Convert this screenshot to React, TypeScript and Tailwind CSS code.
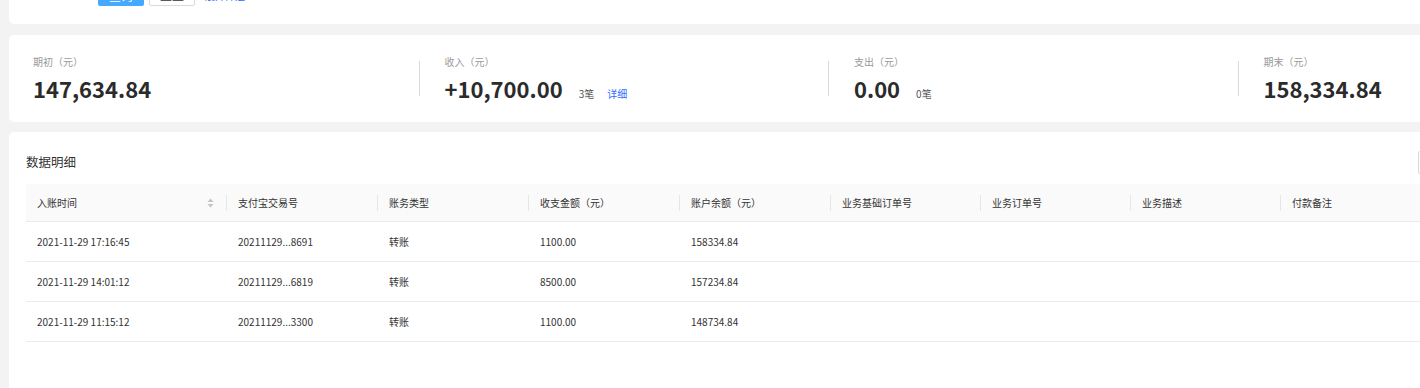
import React from "react";

const font = { fontFamily: '"Noto Sans CJK SC", "Noto Sans", sans-serif' };

function Stat({
  label,
  value,
  extra,
  link,
  first,
}: {
  label: string;
  value: string;
  extra?: string;
  link?: string;
  first?: boolean;
}) {
  return (
    <div className="flex w-[409.5px] shrink-0 items-center">
      {!first && <div className="h-[35px] w-px bg-[#d9d9d9]" />}
      <div className={first ? "pl-[24px]" : "pl-[25px]"}>
        <div className="text-[10px] leading-[14px] text-[#999]">{label}</div>
        <div className="mt-[5px] flex items-baseline">
          <span className="text-[22px] font-bold leading-[28px] text-[#2b2b2b]">{value}</span>
          {extra && <span className="ml-[16px] text-[10px] text-[#555]">{extra}</span>}
          {link && <span className="ml-[13px] text-[10px] text-[#2f6bff]">{link}</span>}
        </div>
      </div>
    </div>
  );
}

const cols = [
  "入账时间",
  "支付宝交易号",
  "账务类型",
  "收支金额（元）",
  "账户余额（元）",
  "业务基础订单号",
  "业务订单号",
  "业务描述",
  "付款备注",
];

const rows = [
  ["2021-11-29 17:16:45", "20211129...8691", "转账", "1100.00", "158334.84"],
  ["2021-11-29 14:01:12", "20211129...6819", "转账", "8500.00", "157234.84"],
  ["2021-11-29 11:15:12", "20211129...3300", "转账", "1100.00", "148734.84"],
];

const grid =
  "grid grid-cols-[200px_151px_151px_151px_151px_150px_150px_150px_200px]";

function SortIcon() {
  return (
    <svg width="7" height="10" viewBox="0 0 7 10" className="shrink-0">
      <path d="M3.5 0.5 L6.5 4 L0.5 4 Z" fill="#c4c4c4" />
      <path d="M3.5 9.5 L6.5 6 L0.5 6 Z" fill="#c4c4c4" />
    </svg>
  );
}

export default function App() {
  return (
    <div
      className="h-[388px] w-[1420px] overflow-hidden bg-[#f3f3f3]"
      style={font}
    >
      {/* top filter card */}
      <div className="ml-[9px] -mt-[30px] h-[54px] w-[1700px] rounded-[5px] bg-white">
        <div className="flex items-end gap-[5px] pl-[89px] pt-[12px]">
          <button className="flex h-[24px] w-[46px] items-end justify-center rounded-[2px] bg-[#45a9ff] pb-[3px] text-[12px] leading-[14px] text-white">
            查询
          </button>
          <button className="flex h-[24px] w-[46px] items-end justify-center rounded-[2px] border border-[#d9d9d9] bg-white pb-[3px] text-[12px] leading-[14px] text-[#333]">
            重置
          </button>
          <span className="ml-[5px] flex h-[24px] items-end pb-[3px] text-[10px] leading-[14px] text-[#1f6fff]">
            展开筛选
          </span>
        </div>
      </div>

      {/* stats card */}
      <div className="ml-[9px] mt-[11px] flex h-[87px] w-[1700px] items-center rounded-[5px] bg-white">
        <Stat first label="期初（元）" value="147,634.84" />
        <Stat label="收入（元）" value="+10,700.00" extra="3笔" link="详细" />
        <Stat label="支出（元）" value="0.00" extra="0笔" />
        <Stat label="期末（元）" value="158,334.84" />
      </div>

      {/* table card */}
      <div className="ml-[9px] mt-[10px] h-[400px] w-[1700px] rounded-[5px] bg-white pl-[17px]">
        <div className="flex h-[52px] items-center justify-between pr-[231px]">
          <div className="pt-[8px] text-[12.5px] text-[#333]">数据明细</div>
          <div className="mt-[8px] h-[23px] w-[60px] rounded-[2px] border border-[#d9d9d9] bg-white" />
        </div>
        <div className={`${grid} h-[38px] border-b border-[#ebebeb] bg-[#fafafa] text-[10px] text-[#333]`}>
          {cols.map((c, i) => (
            <div key={c} className="flex items-center">
              {i > 0 && <div className="h-[16px] w-px bg-[#e6e6e6]" />}
              <div className={`flex flex-1 items-center ${i === 0 ? "pl-[11px] pr-[12px]" : "pl-[11px]"}`}>
                <span className="flex-1">{c}</span>
                {i === 0 && <SortIcon />}
              </div>
            </div>
          ))}
        </div>
        {rows.map((r) => (
          <div
            key={r[0]}
            className={`${grid} h-[40px] border-b border-[#ebebeb] text-[10px] text-[#333]`}
          >
            {cols.map((c, i) => (
              <div key={c} className={`flex items-center ${i === 0 ? "pl-[11px]" : "pl-[12px]"}`}>
                {r[i] ?? ""}
              </div>
            ))}
          </div>
        ))}
      </div>
    </div>
  );
}
